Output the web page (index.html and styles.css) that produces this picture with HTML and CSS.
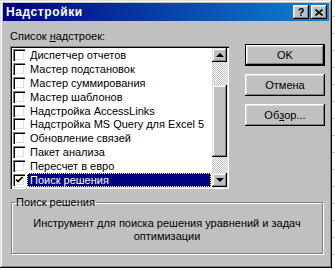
FILE: index.html
```html
<!DOCTYPE html>
<html lang="ru">

<head>
    <meta charset="UTF-8">
    <title>Надстройки</title>
    <link rel="stylesheet" href="styles.css">
</head>

<body>
    <div class="dialog">
        <div class="titlebar">
            <span class="title">Надстройки</span>
            <div class="caption-btns">
                <div class="cap-btn help">?</div>
                <div class="cap-btn">
                    <svg width="8" height="7" viewBox="0 0 8 7">
                        <path d="M0.5 0.5 L7.5 6.5 M7.5 0.5 L0.5 6.5" stroke="#000" stroke-width="1.6" fill="none" />
                    </svg>
                </div>
            </div>
        </div>
        <div class="content">
            <div class="main">
                <div class="list-col">
                    <div class="list-label">Список <u>н</u>адстроек:</div>
                    <div class="listbox">
                        <ul class="items">
                            <li><span class="check"></span><span class="name">Диспетчер отчетов</span></li>
                            <li><span class="check"></span><span class="name">Мастер подстановок</span></li>
                            <li><span class="check"></span><span class="name">Мастер суммирования</span></li>
                            <li><span class="check"></span><span class="name">Мастер шаблонов</span></li>
                            <li><span class="check"></span><span class="name">Надстройка AccessLinks</span></li>
                            <li><span class="check"></span><span class="name">Надстройка MS Query для Excel 5</span></li>
                            <li><span class="check"></span><span class="name">Обновление связей</span></li>
                            <li><span class="check"></span><span class="name">Пакет анализа</span></li>
                            <li><span class="check"></span><span class="name">Пересчет в евро</span></li>
                            <li class="selected">
                                <span class="check">
                                    <svg width="12" height="12" viewBox="0 0 12 12">
                                        <path d="M3 5.5 L5 7.5 L9.5 3" stroke="#000" stroke-width="1.7" fill="none" />
                                    </svg>
                                </span>
                                <span class="name">Поиск решения</span>
                            </li>
                        </ul>
                        <div class="scrollbar">
                            <div class="sb-btn"><span class="arrow up"></span></div>
                            <div class="sb-track"><div class="sb-thumb"></div></div>
                            <div class="sb-btn"><span class="arrow down"></span></div>
                        </div>
                    </div>
                </div>
                <div class="btn-col">
                    <div class="btn default">OK</div>
                    <div class="btn">Отмена</div>
                    <div class="btn">Об<u>з</u>ор...</div>
                </div>
            </div>
            <fieldset class="group">
                <legend>Поиск решения</legend>
                <p>Инструмент для поиска решения уравнений и задач оптимизации</p>
            </fieldset>
        </div>
    </div>
</body>

</html>
```

FILE: styles.css
```css
* {
    box-sizing: border-box;
}

body {
    margin: 0;
    font-family: "Liberation Sans", Arial, sans-serif;
    font-size: 11px;
    color: #000;
    background-color: #fff;
    background-image: repeating-linear-gradient(to bottom, transparent 0 16px, #c8c8c8 16px 17px);
}

.dialog {
    width: 332px;
    height: 268px;
    padding: 3px;
    background: #c0c0c0;
    box-shadow: inset -1px -1px #000, inset 1px 1px #dfdfdf, inset -2px -2px #808080, inset 2px 2px #fff;
    display: flex;
    flex-direction: column;
}

.titlebar {
    height: 18px;
    padding: 0 2px 0 3px;
    background: linear-gradient(to right, #000080, #1084d0);
    display: flex;
    align-items: center;
    justify-content: space-between;
}

.title {
    color: #fff;
    font-weight: bold;
    font-size: 12px;
    letter-spacing: 0.6px;
}

.caption-btns {
    display: flex;
    gap: 2px;
}

.cap-btn {
    width: 16px;
    height: 14px;
    background: #c0c0c0;
    box-shadow: inset -1px -1px #000, inset 1px 1px #fff, inset -2px -2px #808080, inset 2px 2px #dfdfdf;
    display: flex;
    align-items: center;
    justify-content: center;
}

.cap-btn.help {
    font-weight: bold;
    font-size: 11px;
    line-height: 14px;
}

.content {
    padding: 9px 3px 0 7px;
    display: flex;
    flex-direction: column;
}

.main {
    display: flex;
    gap: 16px;
}

.list-label {
    line-height: 13px;
    margin-bottom: 3px;
}

.listbox {
    width: 219px;
    height: 143px;
    padding: 2px;
    background: #fff;
    box-shadow: inset 1px 1px #808080, inset 2px 2px #000, inset -1px -1px #fff, inset -2px -2px #dfdfdf;
    display: flex;
}

.items {
    list-style: none;
    margin: 0;
    padding: 0;
    flex: 1;
}

.items li {
    height: 13.9px;
    display: flex;
    align-items: center;
    padding-left: 1px;
}

.check {
    width: 12px;
    height: 12px;
    flex: none;
    background: #fff;
    box-shadow: inset 1px 1px #808080, inset 2px 2px #000, inset -1px -1px #fff, inset -2px -2px #dfdfdf;
}

.check svg {
    display: block;
}

.name {
    margin-left: 2px;
    padding: 0 2px;
    line-height: 12px;
    border: 1px solid transparent;
}

.selected .name {
    flex: 1;
    margin-right: 1px;
    background: #000080;
    color: #fff;
    border: 1px dotted #ffffa0;
}

.scrollbar {
    width: 15px;
    display: flex;
    flex-direction: column;
}

.sb-btn {
    height: 14px;
    background: #c0c0c0;
    box-shadow: inset -1px -1px #000, inset 1px 1px #dfdfdf, inset -2px -2px #808080, inset 2px 2px #fff;
    display: flex;
    align-items: center;
    justify-content: center;
}

.arrow {
    width: 0;
    height: 0;
    border-left: 4px solid transparent;
    border-right: 4px solid transparent;
}

.arrow.up {
    border-bottom: 4px solid #000;
}

.arrow.down {
    border-top: 4px solid #000;
}

.sb-track {
    flex: 1;
    background-image: conic-gradient(#fff 25%, #c0c0c0 0 50%, #fff 0 75%, #c0c0c0 0);
    background-size: 2px 2px;
}

.sb-thumb {
    margin-top: 23px;
    height: 72px;
    background: #c0c0c0;
    box-shadow: inset -1px -1px #000, inset 1px 1px #dfdfdf, inset -2px -2px #808080, inset 2px 2px #fff;
}

.btn-col {
    padding-top: 14px;
    display: flex;
    flex-direction: column;
    gap: 8px;
}

.btn {
    width: 80px;
    height: 22px;
    background: #c0c0c0;
    box-shadow: inset -1px -1px #000, inset 1px 1px #fff, inset -2px -2px #808080, inset 2px 2px #dfdfdf;
    display: flex;
    align-items: center;
    justify-content: center;
}

.btn.default {
    border: 1px solid #000;
}

.group {
    width: 312px;
    height: 58px;
    margin: 7px 0 0 1px;
    padding: 0 10px;
    border: 1px solid #808080;
    box-shadow: inset 1px 1px #fff, 1px 1px #fff;
}

.group legend {
    margin-left: -7px;
    padding: 0 1px;
    line-height: 13px;
}

.group p {
    margin: 8px 0 0;
    text-align: center;
    line-height: 13px;
    font-size: 11px;
}
```
